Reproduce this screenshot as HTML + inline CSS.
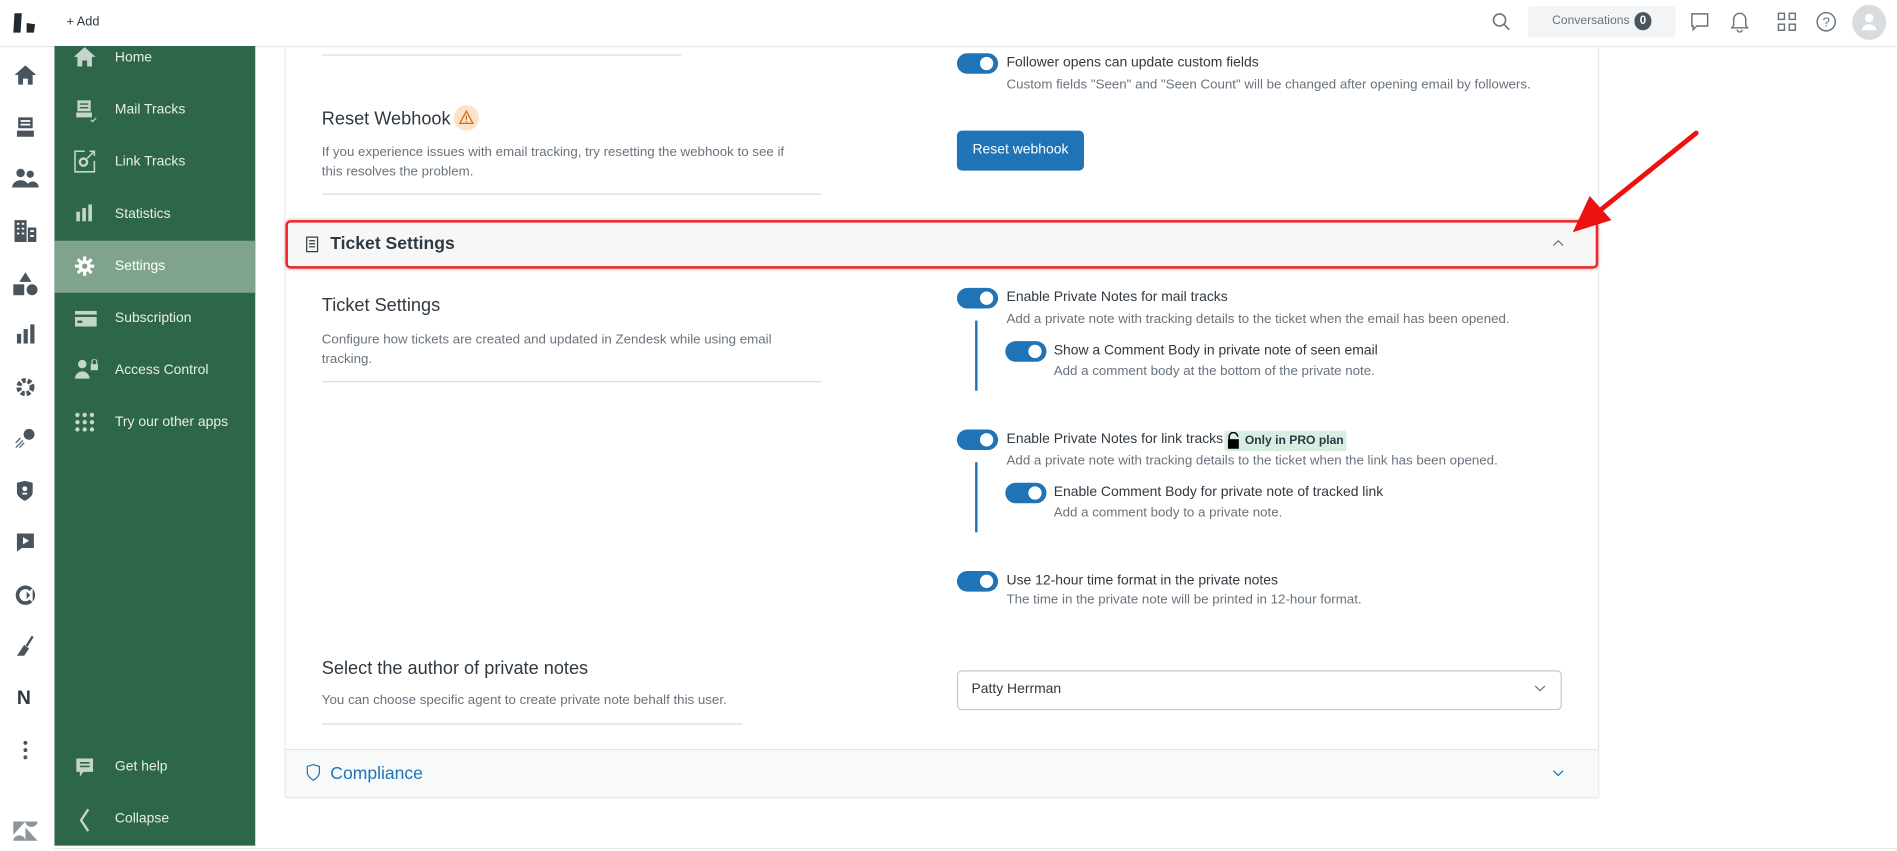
<!DOCTYPE html>
<html><head><meta charset="utf-8"><style>
*{box-sizing:border-box;margin:0;padding:0}
html,body{width:1897px;height:850px;overflow:hidden;background:#fff;font-family:"Liberation Sans",sans-serif}
#w{position:absolute;left:0;top:0;width:1568px;height:703px;transform:scale(1.2098);transform-origin:0 0}
.a{position:absolute}
.t{position:absolute;white-space:nowrap}
.nav .t{color:#e8efe9;font-size:11.5px}
.tg{position:absolute;width:34px;height:17px;border-radius:9px;background:#1f73b7}
.tg:after{content:"";position:absolute;right:4px;top:3px;width:11px;height:11px;border-radius:50%;background:#fff}
.lb{font-size:11.5px;color:#2f3941}
.ds{font-size:11px;color:#68737d}
</style></head><body><div id="w">
<div class="a" style="left:0;top:38px;width:1568px;height:1px;background:#e6e8ea"></div>
<svg class="a" style="left:10px;top:10px" width="22" height="18" viewBox="0 0 22 18"><path d="M2 1h6l-1 16H1z" fill="#1f2a33"/><path d="M12 9l7 1-1 7h-6z" fill="#1f2a33"/></svg>
<div class="t" style="left:55px;top:12px;font-size:10.5px;color:#2f3941">+ Add</div>
<svg class="a" style="left:1233px;top:10px" width="16" height="16" viewBox="0 0 16 16"><circle cx="6.5" cy="6.5" r="5" fill="none" stroke="#68737d" stroke-width="1.3"/><path d="M10 10l4.5 4.5" stroke="#68737d" stroke-width="1.3"/></svg>
<div class="a" style="left:1263px;top:5px;width:122px;height:26px;background:#f3f4f5;border-radius:3px"></div>
<div class="t" style="left:1283px;top:12px;font-size:10px;color:#68737d">Conversations</div>
<div class="a" style="left:1351px;top:10px;width:14px;height:15px;border-radius:8px;background:#49545c;color:#fff;font-size:9.5px;text-align:center;line-height:15px;font-weight:bold">0</div>
<svg class="a" style="left:1397px;top:10px" width="16" height="17" viewBox="0 0 16 17"><path d="M1.5 1.5h13v10h-9l-3 3v-3h-1z" fill="none" stroke="#68737d" stroke-width="1.2"/></svg>
<svg class="a" style="left:1430px;top:9px" width="16" height="18" viewBox="0 0 16 18"><path d="M3 12V7a5 5 0 0110 0v5l1.5 2h-13zM6 15.5a2 2 0 004 0" fill="none" stroke="#68737d" stroke-width="1.2"/></svg>
<svg class="a" style="left:1469px;top:10px" width="16" height="16" viewBox="0 0 16 16" fill="none" stroke="#68737d" stroke-width="1.2"><rect x="1" y="1" width="5" height="5"/><rect x="10" y="1" width="5" height="5"/><rect x="1" y="10" width="5" height="5"/><rect x="10" y="10" width="5" height="5"/></svg>
<svg class="a" style="left:1501px;top:9px" width="17" height="18" viewBox="0 0 17 18"><circle cx="8.5" cy="9" r="7.5" fill="none" stroke="#68737d" stroke-width="1.2"/><text x="5.5" y="13" font-size="11" fill="#68737d" font-family="Liberation Sans">?</text></svg>
<div class="a" style="left:1531px;top:4px;width:28px;height:29px;border-radius:50%;background:#d8dcde"></div>
<svg class="a" style="left:1538px;top:10px" width="14" height="16" viewBox="0 0 14 16"><circle cx="7" cy="5" r="3.5" fill="#fff"/><path d="M1 15a6 5 0 0112 0z" fill="#fff"/></svg>
<div class="rail">
<svg class="a" style="left:11px;top:53px" width="20" height="18" viewBox="0 0 20 18"><path d="M10 1L1 9h3v8h4v-5h4v5h4V9h3z" fill="#49545c"/></svg>
<svg class="a" style="left:13px;top:96px" width="16" height="18" viewBox="0 0 16 18" fill="#49545c"><path d="M2 1h12v9H2zM1 12h14v5H1z"/><path d="M4 4h8M4 7h8" stroke="#fff" stroke-width="1.4"/></svg>
<svg class="a" style="left:10px;top:139px" width="22" height="17" viewBox="0 0 22 17" fill="#49545c"><circle cx="7" cy="4" r="3.5"/><circle cx="15" cy="5" r="3"/><path d="M0 16a7 6 0 0114 0zM12 16a5 5 0 0110 0z"/></svg>
<svg class="a" style="left:11px;top:181px" width="20" height="19" viewBox="0 0 20 19" fill="#49545c"><path d="M1 1h10v18H1zM12 7h7v12h-7z"/><path d="M3 4h2M7 4h2M3 8h2M7 8h2M3 12h2M7 12h2M14 10h3M14 14h3" stroke="#fff" stroke-width="1.5"/></svg>
<svg class="a" style="left:10px;top:224px" width="22" height="21" viewBox="0 0 22 21" fill="#49545c"><path d="M11 1l5 8H6z"/><rect x="1" y="11" width="9" height="9"/><circle cx="16.5" cy="15.5" r="4.5"/></svg>
<svg class="a" style="left:13px;top:268px" width="16" height="16" viewBox="0 0 16 16" fill="#49545c"><rect x="1" y="8" width="3.5" height="8"/><rect x="6.5" y="4" width="3.5" height="12"/><rect x="12" y="0" width="3.5" height="16"/></svg>
<svg class="a" style="left:12px;top:311px" width="18" height="18" viewBox="0 0 18 18"><circle cx="9" cy="9" r="5.5" fill="none" stroke="#49545c" stroke-width="4" stroke-dasharray="3 1.6"/><circle cx="9" cy="9" r="2" fill="#fff"/></svg>
<svg class="a" style="left:12px;top:353px" width="18" height="18" viewBox="0 0 18 18"><circle cx="12" cy="6" r="4.5" fill="#49545c"/><path d="M1 17l6-6M4 17l4-4M1 13l4-4" stroke="#49545c" stroke-width="1"/></svg>
<svg class="a" style="left:13px;top:397px" width="15" height="18" viewBox="0 0 15 18"><path d="M1 2l6.5-1.5L14 2v8c0 4-6.5 7-6.5 7S1 14 1 10z" fill="#49545c"/><circle cx="7.5" cy="7" r="2" fill="#fff"/><path d="M5.5 11h4" stroke="#fff" stroke-width="1.5"/></svg>
<svg class="a" style="left:13px;top:440px" width="16" height="17" viewBox="0 0 16 17"><path d="M1 1h14v12H5l-4 3z" fill="#49545c"/><path d="M6 4l5 3-5 3z" fill="#fff"/></svg>
<svg class="a" style="left:12px;top:483px" width="18" height="18" viewBox="0 0 18 18"><circle cx="9" cy="9" r="6.5" fill="none" stroke="#49545c" stroke-width="3"/><path d="M9 9l6-6v12z" fill="#fff"/><path d="M10 6l3 3-3 3z" fill="#49545c"/></svg>
<svg class="a" style="left:12px;top:525px" width="18" height="18" viewBox="0 0 18 18"><path d="M15 1l-5 8" stroke="#49545c" stroke-width="2"/><path d="M8 8l4 3-4 6H2z" fill="#49545c"/></svg>
<div class="t" style="left:14px;top:569px;font-size:16px;font-weight:bold;color:#2f3941">N</div>
<svg class="a" style="left:19px;top:612px" width="4" height="16" viewBox="0 0 4 16" fill="#49545c"><circle cx="2" cy="2" r="1.6"/><circle cx="2" cy="8" r="1.6"/><circle cx="2" cy="14" r="1.6"/></svg>
<svg class="a" style="left:10px;top:678px" width="22" height="18" viewBox="0 0 22 18" fill="#8d959b"><path d="M1 1h10L1 12zM11 17H21L11 6zM11 1a5 4.5 0 0010 0zM1 17a5 4.5 0 0110 0z"/></svg>
</div>
<div class="a nav" style="left:45px;top:38px;width:166px;height:661px;background:#2e6649">
<div class="a" style="left:0;top:161px;width:166px;height:43px;background:#7fa38d"></div>
<svg class="a" style="left:15px;top:1px" width="20" height="17" viewBox="0 0 20 17"><path d="M10 0L1 8h3v8h4v-5h4v5h4V8h3z" fill="#c5d5cb"/></svg>
<div class="t" style="left:50px;top:4px">Home</div>
<svg class="a" style="left:17px;top:44px" width="18" height="19" viewBox="0 0 18 19" fill="#c5d5cb"><path d="M2 1h11v9H2zM1 11h13v4H1z"/><path d="M4 4h7M4 7h7" stroke="#2e6649" stroke-width="1.2"/><path d="M13 17l1.5 1.5 3-3" stroke="#c5d5cb" fill="none"/></svg>
<div class="t" style="left:50px;top:47px">Mail Tracks</div>
<svg class="a" style="left:15px;top:85px" width="20" height="20" viewBox="0 0 20 20" fill="none" stroke="#c5d5cb" stroke-width="1.3"><path d="M10 2H2v17h16v-9"/><circle cx="9" cy="11" r="3" stroke-width="2"/><path d="M12 8l6-6M14 2h4v4"/></svg>
<div class="t" style="left:50px;top:90px">Link Tracks</div>
<svg class="a" style="left:18px;top:131px" width="14" height="14" viewBox="0 0 14 14" fill="#c5d5cb"><rect x="0" y="6" width="3" height="8"/><rect x="5" y="3" width="3" height="11"/><rect x="10" y="0" width="3" height="14"/></svg>
<div class="t" style="left:50px;top:133px">Statistics</div>
<svg class="a" style="left:17px;top:174px" width="16" height="16" viewBox="0 0 16 16"><circle cx="8" cy="8" r="5" fill="#fff"/><g stroke="#fff" stroke-width="2.6"><path d="M8 0v16M0 8h16M2.3 2.3l11.4 11.4M13.7 2.3L2.3 13.7"/></g><circle cx="8" cy="8" r="2.2" fill="#7fa38d"/></svg>
<div class="t" style="left:50px;top:176px;color:#fff">Settings</div>
<svg class="a" style="left:17px;top:219px" width="18" height="13" viewBox="0 0 18 13" fill="#c5d5cb"><rect x="0" y="0" width="18" height="3"/><rect x="0" y="5" width="18" height="8"/><rect x="2" y="8" width="4" height="2" fill="#2e6649"/></svg>
<div class="t" style="left:50px;top:219px">Subscription</div>
<svg class="a" style="left:17px;top:259px" width="20" height="17" viewBox="0 0 20 17" fill="#c5d5cb"><circle cx="6" cy="4" r="3.5"/><path d="M0 16a6 6 0 0112 0z"/><rect x="13" y="4" width="6" height="5"/><path d="M14 4V2a2 2 0 014 0v2" fill="none" stroke="#c5d5cb"/></svg>
<div class="t" style="left:50px;top:262px">Access Control</div>
<svg class="a" style="left:17px;top:303px" width="16" height="16" viewBox="0 0 16 16" fill="#c5d5cb"><circle cx="2" cy="2" r="1.8"/><circle cx="8" cy="2" r="1.8"/><circle cx="14" cy="2" r="1.8"/><circle cx="2" cy="8" r="1.8"/><circle cx="8" cy="8" r="1.8"/><circle cx="14" cy="8" r="1.8"/><circle cx="2" cy="14" r="1.8"/><circle cx="8" cy="14" r="1.8"/><circle cx="14" cy="14" r="1.8"/></svg>
<div class="t" style="left:50px;top:305px">Try our other apps</div>
<svg class="a" style="left:18px;top:589px" width="14" height="16" viewBox="0 0 14 16"><path d="M0 0h14v11H6l-3 4v-4H0z" fill="#c5d5cb"/><path d="M3 3.5h8M3 6.5h8" stroke="#2e6649" stroke-width="1.3"/></svg>
<div class="t" style="left:50px;top:590px">Get help</div>
<svg class="a" style="left:20px;top:630px" width="10" height="20" viewBox="0 0 10 20"><path d="M8 1L2 10l6 9" fill="none" stroke="#c5d5cb" stroke-width="2"/></svg>
<div class="t" style="left:50px;top:633px">Collapse</div>
</div>
<div class="a" style="left:45px;top:701px;width:1523px;height:1px;background:#e6e8ea"></div>
<div class="a" style="left:235px;top:38px;width:1087px;height:622px;border:1px solid #e3e6e8;border-top:none;border-radius:0 0 3px 3px"></div>
<div class="a" style="left:266px;top:45px;width:297px;height:1px;background:#d8dcde"></div>
<div class="t" style="left:266px;top:90px;font-size:15px;color:#2f3941">Reset Webhook</div>
<div class="a" style="left:375px;top:87px;width:21px;height:21px;border-radius:50%;background:#fde3c6"></div>
<svg class="a" style="left:379px;top:91px" width="13" height="12" viewBox="0 0 13 12"><path d="M6.5 1L12 11H1z" fill="none" stroke="#c96a1c" stroke-width="1"/><path d="M6.5 4.5v3.5M6.5 9v1" stroke="#c96a1c"/></svg>
<div class="t ds" style="left:266px;top:120px">If you experience issues with email tracking, try resetting the webhook to see if</div>
<div class="t ds" style="left:266px;top:136px">this resolves the problem.</div>
<div class="a" style="left:266px;top:160px;width:413px;height:1px;background:#d8dcde"></div>
<div class="tg" style="left:791px;top:44px"></div>
<div class="t lb" style="left:832px;top:46px">Follower opens can update custom fields</div>
<div class="t ds" style="left:832px;top:64px">Custom fields "Seen" and "Seen Count" will be changed after opening email by followers.</div>
<div class="a" style="left:791px;top:108px;width:105px;height:33px;background:#1f73b7;border-radius:4px;color:#fff;font-size:11.5px;text-align:center;line-height:33px">Reset webhook</div>
<div class="a" style="left:236px;top:182px;width:1085px;height:40px;background:#f7f7f7;border:2px solid #e8262b;border-radius:4px;box-shadow:0 0 3px rgba(230,0,0,.4)"></div>
<svg class="a" style="left:252px;top:195px" width="12" height="14" viewBox="0 0 12 14" fill="none" stroke="#2f3941"><rect x="1.5" y="1" width="9" height="12"/><path d="M3.5 4h5M3.5 6.5h5M3.5 9h5"/></svg>
<div class="t" style="left:273px;top:194px;font-size:14.5px;font-weight:bold;color:#2f3941">Ticket Settings</div>
<svg class="a" style="left:1283px;top:198px" width="10" height="6" viewBox="0 0 10 6"><path d="M1 5l4-4 4 4" fill="none" stroke="#68737d"/></svg>
<div class="t" style="left:266px;top:244px;font-size:15px;color:#2f3941">Ticket Settings</div>
<div class="t ds" style="left:266px;top:275px">Configure how tickets are created and updated in Zendesk while using email</div>
<div class="t ds" style="left:266px;top:291px">tracking.</div>
<div class="a" style="left:266px;top:315px;width:413px;height:1px;background:#d8dcde"></div>
<div class="tg" style="left:791px;top:238px"></div>
<div class="t lb" style="left:832px;top:240px">Enable Private Notes for mail tracks</div>
<div class="t ds" style="left:832px;top:258px">Add a private note with tracking details to the ticket when the email has been opened.</div>
<div class="a" style="left:806px;top:265px;width:2px;height:58px;background:#1f73b7"></div>
<div class="tg" style="left:831px;top:282px"></div>
<div class="t lb" style="left:871px;top:284px">Show a Comment Body in private note of seen email</div>
<div class="t ds" style="left:871px;top:301px">Add a comment body at the bottom of the private note.</div>
<div class="tg" style="left:791px;top:355px"></div>
<div class="t lb" style="left:832px;top:357px">Enable Private Notes for link tracks</div>
<div class="a" style="left:1012px;top:356px;width:101px;height:17px;background:#d9eee2;border-radius:2px"></div>
<svg class="a" style="left:1014px;top:357px" width="11" height="14" viewBox="0 0 11 14"><path d="M2 6V4a3.5 3.5 0 017 0" fill="none" stroke="#000" stroke-width="1.3"/><rect x="1" y="6" width="9" height="8" fill="#000"/></svg>
<div class="t" style="left:1029px;top:359px;font-size:10px;font-weight:bold;color:#2f3941">Only in PRO plan</div>
<div class="t ds" style="left:832px;top:375px">Add a private note with tracking details to the ticket when the link has been opened.</div>
<div class="a" style="left:806px;top:382px;width:2px;height:58px;background:#1f73b7"></div>
<div class="tg" style="left:831px;top:399px"></div>
<div class="t lb" style="left:871px;top:401px">Enable Comment Body for private note of tracked link</div>
<div class="t ds" style="left:871px;top:418px">Add a comment body to a private note.</div>
<div class="tg" style="left:791px;top:472px"></div>
<div class="t lb" style="left:832px;top:474px">Use 12-hour time format in the private notes</div>
<div class="t ds" style="left:832px;top:490px">The time in the private note will be printed in 12-hour format.</div>
<div class="t" style="left:266px;top:544px;font-size:15px;color:#2f3941">Select the author of private notes</div>
<div class="t ds" style="left:266px;top:573px">You can choose specific agent to create private note behalf this user.</div>
<div class="a" style="left:266px;top:598px;width:348px;height:1px;background:#d8dcde"></div>
<div class="a" style="left:791px;top:554px;width:500px;height:33px;border:1px solid #c2c8cc;border-radius:4px"></div>
<div class="t lb" style="left:803px;top:564px">Patty Herrman</div>
<svg class="a" style="left:1268px;top:566px" width="10" height="6" viewBox="0 0 10 6"><path d="M1 1l4 4 4-4" fill="none" stroke="#68737d"/></svg>
<div class="a" style="left:236px;top:619px;width:1085px;height:40px;background:#f8f9f9;border-top:1px solid #e3e6e8;border-radius:0 0 3px 3px"></div>
<svg class="a" style="left:253px;top:631px" width="12" height="15" viewBox="0 0 12 15"><path d="M1 2.5L6 1l5 1.5v5C11 11 6 14 6 14S1 11 1 7.5z" fill="none" stroke="#1f73b7"/></svg>
<div class="t" style="left:273px;top:632px;font-size:14.5px;color:#1f73b7">Compliance</div>
<svg class="a" style="left:1283px;top:636px" width="10" height="6" viewBox="0 0 10 6"><path d="M1 1l4 4 4-4" fill="none" stroke="#1f73b7"/></svg>
<svg class="a" style="left:1290px;top:100px" width="120" height="100" viewBox="0 0 120 100"><path d="M112 10L30 76" stroke="#ee1111" stroke-width="4" stroke-linecap="round"/><path d="M10 92L24 62 42 82z" fill="#ee1111"/></svg>
</div></body></html>
